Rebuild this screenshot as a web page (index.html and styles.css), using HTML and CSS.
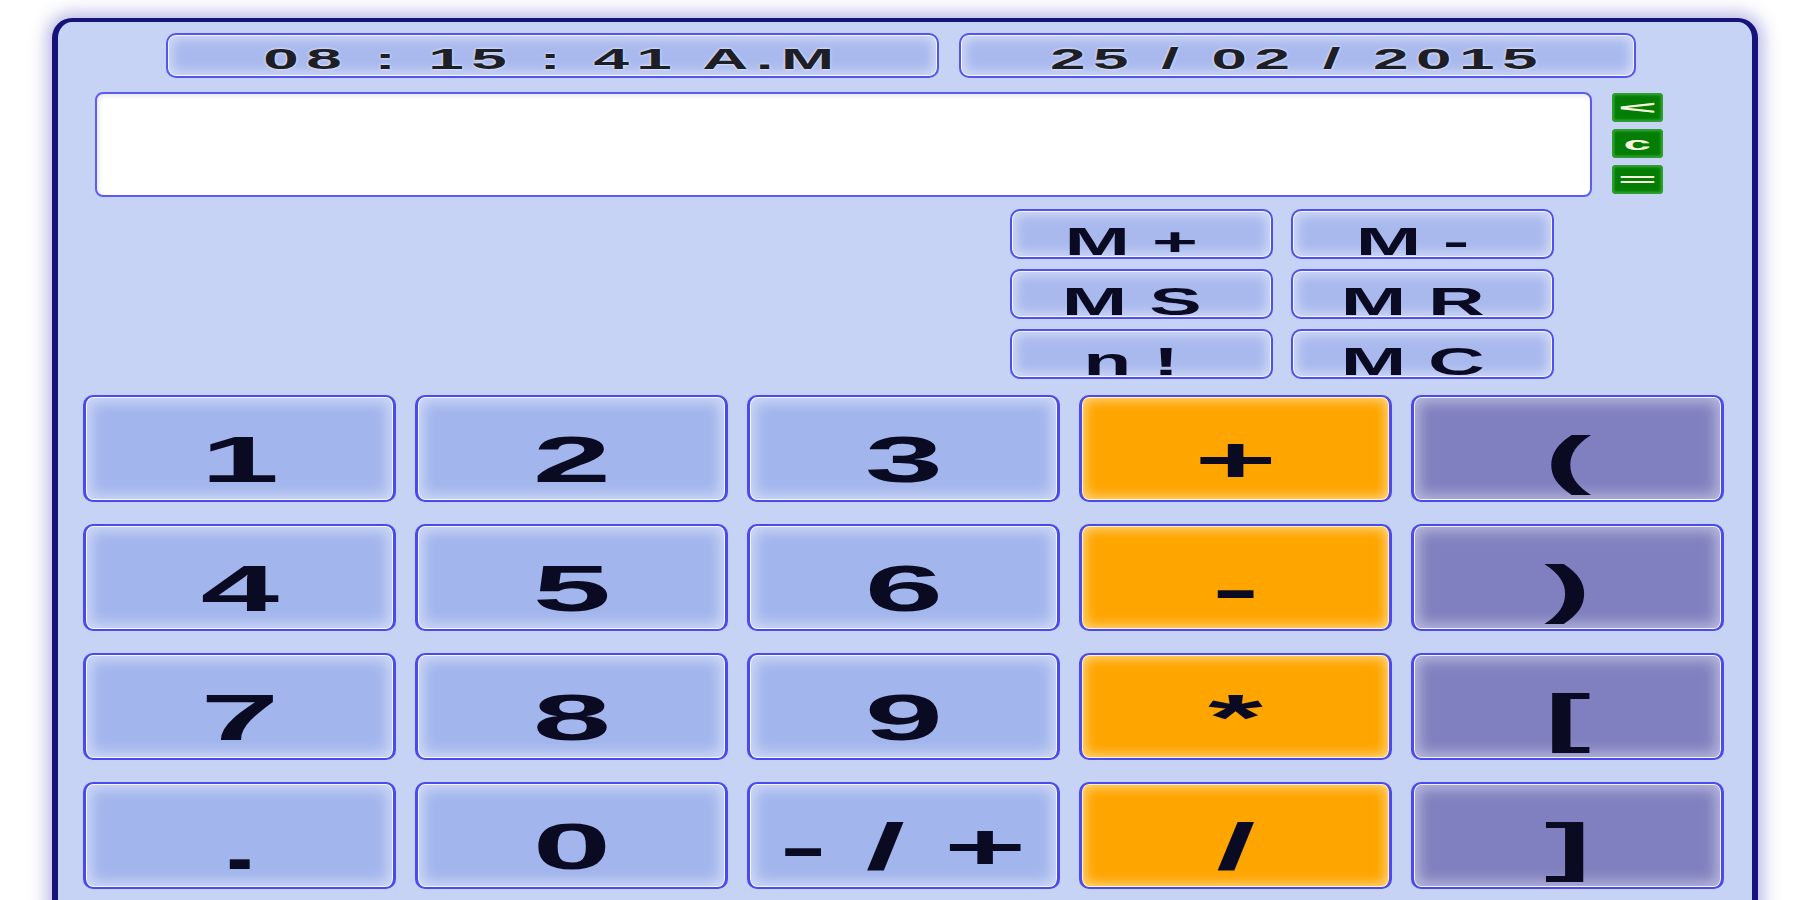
FILE: index.html
```html
<!DOCTYPE html>
<html>
<head>
<meta charset="utf-8">
<title>Calculator</title>
<link rel="stylesheet" href="styles.css">
</head>
<body>
<div class="calc">
  <div class="clock-row">
    <div class="pill time"><span class="s">08 : 15 : 41 A.M</span></div>
    <div class="pill date"><span class="s">25 / 02 / 2015</span></div>
  </div>
  <div class="display-row">
    <div class="display"></div>
    <div class="side">
      <div class="g"><span class="s wide">&lt;</span></div>
      <div class="g"><span class="s">c</span></div>
      <div class="g"><span class="s wide">=</span></div>
    </div>
  </div>
  <div class="mem">
    <div class="mk"><span class="s">M +</span></div>
    <div class="mk"><span class="s">M -</span></div>
    <div class="mk"><span class="s">M S</span></div>
    <div class="mk"><span class="s">M R</span></div>
    <div class="mk"><span class="s">n !</span></div>
    <div class="mk"><span class="s">M C</span></div>
  </div>
  <div class="keys">
    <div class="k num"><span class="s">1</span></div>
    <div class="k num"><span class="s">2</span></div>
    <div class="k num"><span class="s">3</span></div>
    <div class="k op"><span class="s">+</span></div>
    <div class="k br"><span class="s">(</span></div>
    <div class="k num"><span class="s">4</span></div>
    <div class="k num"><span class="s">5</span></div>
    <div class="k num"><span class="s">6</span></div>
    <div class="k op"><span class="s">-</span></div>
    <div class="k br"><span class="s">)</span></div>
    <div class="k num"><span class="s">7</span></div>
    <div class="k num"><span class="s">8</span></div>
    <div class="k num"><span class="s">9</span></div>
    <div class="k op"><span class="s">*</span></div>
    <div class="k br"><span class="s">[</span></div>
    <div class="k num"><span class="s">.</span></div>
    <div class="k num"><span class="s">0</span></div>
    <div class="k num"><span class="s">- / +</span></div>
    <div class="k op"><span class="s">/</span></div>
    <div class="k br"><span class="s">]</span></div>
  </div>
</div>
</body>
</html>
```
FILE: styles.css
```css
html, body {
  margin: 0;
  padding: 0;
  background: #ffffff;
  overflow: hidden;
}
body {
  font-family: "Liberation Sans", Arial, sans-serif;
  font-weight: bold;
  color: #0a0a22;
}
.calc {
  box-sizing: border-box;
  margin: 18px 0 0 52px;
  width: 1706px;
  height: 1000px;
  border-style: solid;
  border-color: #14147a;
  border-width: 4px 6px;
  border-radius: 20px;
  background: #c6d3f4;
  box-shadow: 0 0 16px 6px rgba(110, 110, 205, 0.45);
  padding: 11px 28px 0 25px;
}
.s {
  display: inline-block;
  transform: scaleX(2.2);
  white-space: pre;
}

/* clock */
.clock-row {
  display: flex;
  gap: 20px;
  margin-left: 83px;
}
.pill {
  box-sizing: border-box;
  height: 45px;
  border: 2px solid #5454f2;
  border-radius: 10px;
  background: #a9b9ee;
  box-shadow: inset 0 0 12px 4px rgba(255, 255, 255, 0.5), inset 0 0 0 1px rgba(255, 255, 255, 0.8);
  text-align: center;
  font-size: 29px;
  line-height: 29px;
  letter-spacing: 3.4px;
  padding-top: 10px;
  color: #1e1e26;
  text-shadow: 0 0 2px #ffffff;
}
.time { width: 773px; }
.date { width: 677px; }

/* display */
.display-row {
  display: flex;
  margin-top: 14px;
}
.display {
  box-sizing: border-box;
  margin-left: 12px;
  width: 1497px;
  height: 105px;
  background: #ffffff;
  border: 2px solid #5c5cf4;
  border-radius: 8px;
  box-shadow: inset 2px 2px 4px rgba(60, 60, 120, 0.12);
}
.side {
  display: flex;
  flex-direction: column;
  gap: 7px;
  margin: 1px 0 0 20px;
  width: 51px;
}
.g {
  box-sizing: border-box;
  height: 29px;
  display: flex;
  align-items: center;
  justify-content: center;
  background: #037d03;
  border: 1px solid #2e9e2e;
  border-radius: 3px;
  box-shadow: inset 0 0 3px 1px rgba(120, 220, 120, 0.5);
  color: #f6f4dc;
  font-size: 19px;
  line-height: 19px;
}
.g .s { transform: scaleX(2.6); }
.g .wide { transform: scaleX(3.5); }

/* memory */
.mem {
  display: grid;
  grid-template-columns: 263px 263px;
  grid-auto-rows: 50px;
  column-gap: 18px;
  row-gap: 10px;
  margin: 12px 0 0 927px;
  width: 544px;
}
.mk {
  box-sizing: border-box;
  border: 2px solid #5050f0;
  border-radius: 10px;
  background: #a9b9ee;
  box-shadow: inset 0 0 12px 4px rgba(255, 255, 255, 0.5), inset 0 0 0 1px rgba(255, 255, 255, 0.8);
  text-align: center;
  font-size: 38px;
  line-height: 38px;
  padding: 12px 20px 0 0;
}
.mk .s { transform: scaleX(2.07); }

/* keypad */
.keys {
  display: grid;
  grid-template-columns: repeat(5, 313px);
  grid-auto-rows: 107px;
  column-gap: 19px;
  row-gap: 22px;
  margin-top: 16px;
}
.k {
  box-sizing: border-box;
  border-style: solid;
  border-color: #4a4af0;
  border-width: 2px 3px;
  border-radius: 10px;
  text-align: center;
  font-size: 64px;
  line-height: 64px;
  padding-top: 31px;
}
.num {
  background: #a2b5ed;
  box-shadow: inset 0 0 14px 5px rgba(255, 255, 255, 0.5), inset 0 0 0 1px rgba(255, 255, 255, 0.85);
}
.op {
  background: #ffa500;
  box-shadow: inset 0 0 12px 3px rgba(255, 240, 200, 0.7), inset 0 0 0 1px rgba(255, 255, 210, 0.9);
}
.br {
  background: #8080c0;
  box-shadow: inset 0 0 14px 5px rgba(255, 255, 255, 0.45), inset 0 0 0 1px rgba(255, 255, 255, 0.85);
}
```
